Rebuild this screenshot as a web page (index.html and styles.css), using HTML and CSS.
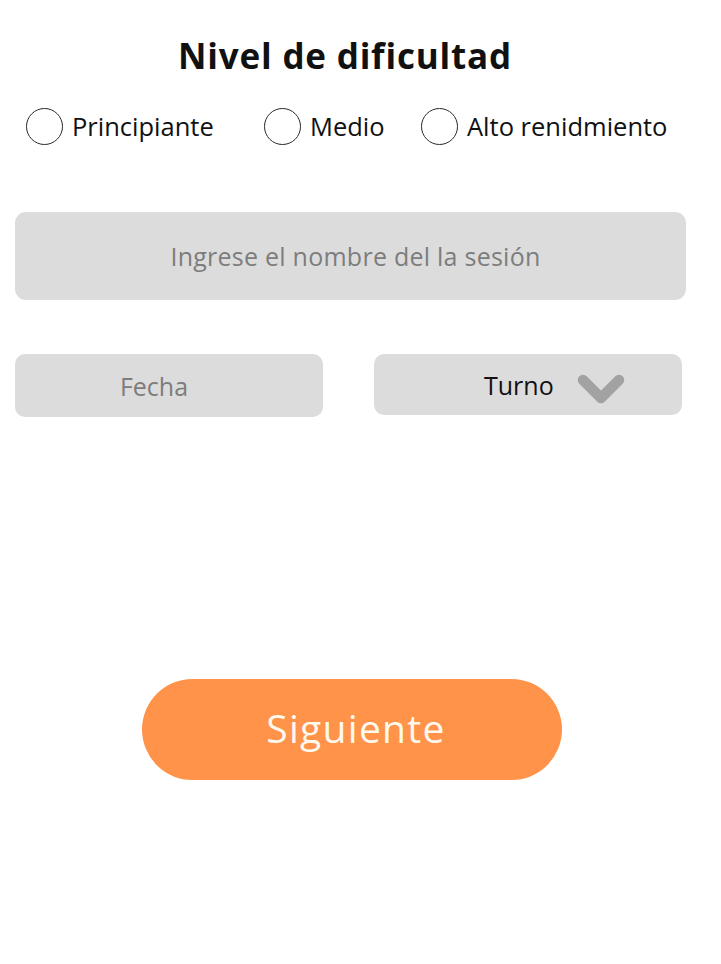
FILE: index.html
```html
<!DOCTYPE html>
<html lang="es">
<head>
<meta charset="utf-8">
<link rel="stylesheet" href="styles.css">
</head>
<body>
<main class="screen">
  <h1 class="title">Nivel de dificultad</h1>
  <div class="levels">
    <label class="level level-1"><span class="radio"></span>Principiante</label>
    <label class="level level-2"><span class="radio"></span>Medio</label>
    <label class="level level-3"><span class="radio"></span>Alto renidmiento</label>
  </div>
  <div class="name-field">Ingrese el nombre del la sesión</div>
  <div class="row">
    <div class="field date">Fecha</div>
    <div class="field shift">
      <span>Turno</span>
      <svg class="chev" width="48" height="32" viewBox="0 0 48 32"><path d="M6 7 L24 25 L42 7" fill="none" stroke="#a2a2a2" stroke-width="10.5" stroke-linecap="round" stroke-linejoin="round"/></svg>
    </div>
  </div>
  <div class="actions">
    <button class="next">Siguiente</button>
  </div>
</main>
</body>
</html>
```
FILE: styles.css
```css
html, body {
  margin: 0;
  padding: 0;
  background: #ffffff;
}
body {
  font-family: "Open Sans", "Noto Sans", sans-serif;
  color: #111;
}
.screen {
  width: 721px;
  height: 964px;
  box-sizing: border-box;
  padding-top: 32px;
}
.title {
  margin: 0;
  text-align: center;
  font-size: 35px;
  font-weight: 700;
  line-height: 48px;
  letter-spacing: 0.8px;
  padding-right: 31px;
}
.levels {
  display: flex;
  align-items: center;
  margin-top: 26px;
  padding-left: 26px;
  height: 40px;
}
.level {
  display: flex;
  align-items: center;
  font-size: 25.5px;
  letter-spacing: 0;
  color: #111;
}
.radio {
  width: 35px;
  height: 35px;
  border: 1.6px solid #2a2a2a;
  border-radius: 50%;
  margin-right: 9px;
  flex: none;
}
.level-1 { width: 238px; }
.level-2 { width: 157px; }
.name-field {
  margin: 66px 35px 0 15px;
  height: 88px;
  background: #dcdcdc;
  border-radius: 11px;
  display: flex;
  align-items: center;
  justify-content: center;
  font-size: 25px;
  color: #7d7d7d;
  letter-spacing: 0.25px;
  padding-left: 10px;
}
.row {
  display: flex;
  margin: 54px 0 0 15px;
  gap: 51px;
  align-items: flex-start;
}
.field {
  flex: none;
  width: 308px;
  box-sizing: border-box;
  background: #dcdcdc;
  border-radius: 10px;
  display: flex;
  align-items: center;
  font-size: 25px;
}
.date {
  height: 63px;
  color: #7d7d7d;
  justify-content: center;
  padding-right: 30px;
}
.shift {
  height: 61px;
  color: #111;
  justify-content: flex-start;
  padding-left: 110px;
  gap: 23px;
}
.chev { display: block; margin-top: 8px; }
.actions {
  display: flex;
  justify-content: center;
  margin-top: 262px;
  padding-right: 18px;
}
.next {
  width: 420px;
  height: 101px;
  border: none;
  border-radius: 51px;
  background: #fe9349;
  color: #fff8ee;
  font-family: "Open Sans", "Noto Sans", sans-serif;
  font-size: 39px;
  letter-spacing: 1.3px;
  padding: 0 0 4px 9px;
}
```
